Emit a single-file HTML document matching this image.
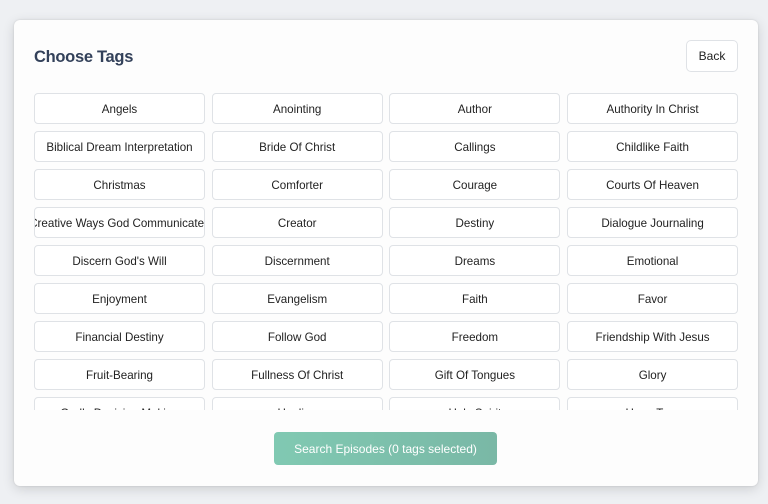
<!DOCTYPE html>
<html><head><style>
body{margin:0;width:768px;height:504px;background:#eef0f3;font-family:"Liberation Sans",sans-serif;overflow:hidden;position:relative}
.card{position:absolute;left:14px;top:20px;width:744px;height:466px;background:#fdfdfd;border-radius:6px;box-shadow:0 3px 12px rgba(0,0,0,.14),0 0 2px rgba(0,0,0,.12)}
h1{position:absolute;left:20px;top:28px;margin:0;font-size:16.5px;font-weight:bold;color:#33415a;letter-spacing:-0.3px}
.back{position:absolute;left:672px;top:20px;width:50px;height:30px;border:1px solid #dfe2e6;border-radius:5px;background:#fff;font-size:12px;color:#222;display:flex;align-items:center;justify-content:center}
.grid{position:absolute;left:20px;top:73px;width:704px;height:317px;overflow:hidden;display:grid;grid-template-columns:repeat(4,171px);column-gap:6.7px;row-gap:7px;align-content:start}
.grid div{height:29px;border:1px solid #dfe2e6;border-radius:4px;background:#fff;font-size:11.6px;color:#222;display:flex;align-items:center;justify-content:center;white-space:nowrap;overflow:hidden;padding-top:1px;box-sizing:content-box;height:28px}
.btn{position:absolute;left:260px;top:412px;width:223px;height:33px;border-radius:4px;background:linear-gradient(90deg,#80c9b2,#7ab8a6);color:#fff;font-size:12px;display:flex;align-items:center;justify-content:center}
</style></head><body>
<div class="card">
<h1>Choose Tags</h1>
<div class="back">Back</div>
<div class="grid">
<div>Angels</div><div>Anointing</div><div>Author</div><div>Authority In Christ</div>
<div>Biblical Dream Interpretation</div><div>Bride Of Christ</div><div>Callings</div><div>Childlike Faith</div>
<div>Christmas</div><div>Comforter</div><div>Courage</div><div>Courts Of Heaven</div>
<div>Creative Ways God Communicates</div><div>Creator</div><div>Destiny</div><div>Dialogue Journaling</div>
<div>Discern God's Will</div><div>Discernment</div><div>Dreams</div><div>Emotional</div>
<div>Enjoyment</div><div>Evangelism</div><div>Faith</div><div>Favor</div>
<div>Financial Destiny</div><div>Follow God</div><div>Freedom</div><div>Friendship With Jesus</div>
<div>Fruit-Bearing</div><div>Fullness Of Christ</div><div>Gift Of Tongues</div><div>Glory</div>
<div>Godly Decision Making</div><div>Healing</div><div>Holy Spirit</div><div>Hope Tree</div>
</div>
<div class="btn">Search Episodes (0 tags selected)</div>
</div>
</body></html>
